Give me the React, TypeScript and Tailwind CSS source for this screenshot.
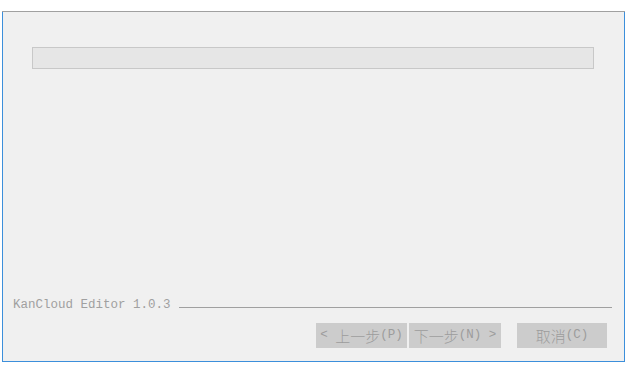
import React from "react";

const mono = { fontFamily: '"Liberation Mono", "Noto Sans CJK SC", monospace' };

function Btn({ children, className = "" }: { children: React.ReactNode; className?: string }) {
  return (
    <div
      className={`h-[25px] flex items-center justify-center bg-[#cccccc] text-[#9c9c9c] text-[12.5px] leading-none ${className}`}
      style={mono}
    >
      {children}
    </div>
  );
}

const Cjk = ({ t }: { t: string }) => (
  <span className="text-[15px]" style={{ fontFamily: '"Noto Sans CJK SC", sans-serif', fontWeight: 300 }}>
    {t}
  </span>
);

export default function App() {
  return (
    <div className="w-[628px] h-[372px] bg-white overflow-hidden flex flex-col">
      <div className="h-[11px] shrink-0 bg-white" />
      <div className="ml-[2px] w-[623px] h-[351px] shrink-0 bg-[#f0f0f0] border-l border-r border-b border-[#3c8fdb] flex flex-col">
        <div className="h-px bg-[#a0a0a0] -mx-px" />
        <div className="pt-[35px] pl-[29px]">
          <div className="w-[562px] h-[22px] bg-[#e6e6e6] border border-[#c8c8c8]" />
        </div>
        <div className="flex-1" />
        <div className="flex items-center pl-[10px] pr-[12px] h-[18px]">
          <span className="text-[12.5px] text-[#a0a0a0] leading-none whitespace-pre" style={mono}>
            KanCloud Editor 1.0.3
          </span>
          <div className="flex-1 ml-[8px] h-px bg-[#a0a0a0] mt-[4px]" />
        </div>
        <div className="flex items-start pt-[9px] pb-[13px] pl-[313px]">
          <Btn className="w-[91px] whitespace-pre">
            {"< "}
            <Cjk t="上一步" />
            {"(P)"}
          </Btn>
          <Btn className="w-[92px] ml-[2px] whitespace-pre">
            <Cjk t="下一步" />
            {"(N) >"}
          </Btn>
          <Btn className="w-[90px] ml-[16px] whitespace-pre">
            <Cjk t="取消" />
            {"(C)"}
          </Btn>
        </div>
      </div>
    </div>
  );
}
